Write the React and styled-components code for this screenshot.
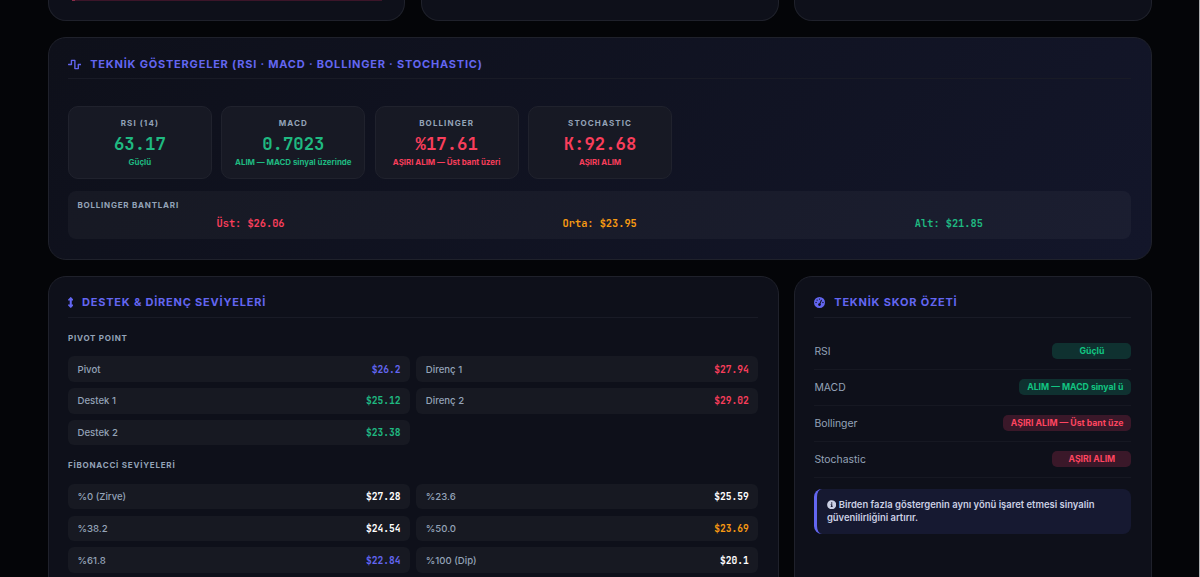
import React from "react";
import styled, { createGlobalStyle } from "styled-components";
import { FaWaveSquare, FaInfoCircle } from "react-icons/fa";
import { FaGaugeHigh, FaUpDown } from "react-icons/fa6";

const colors = {
  accent: "#6366f1",
  green: "#1fb981",
  red: "#f93e5b",
  orange: "#f79a12",
  white: "#ffffff",
  muted: "#94a3b8",
};

const indicators = [
  { name: "RSI (14)", value: "63.17", note: "Güçlü", tone: "green" },
  { name: "MACD", value: "0.7023", note: "ALIM — MACD sinyal üzerinde", tone: "green" },
  { name: "BOLLINGER", value: "%17.61", note: "AŞIRI ALIM — Üst bant üzeri", tone: "red" },
  { name: "STOCHASTIC", value: "K:92.68", note: "AŞIRI ALIM", tone: "red" },
];

const bands = [
  { text: "Üst: $26.06", tone: "red" },
  { text: "Orta: $23.95", tone: "orange" },
  { text: "Alt: $21.85", tone: "green" },
];

const pivots = [
  { label: "Pivot", value: "$26.2", tone: "accent" },
  { label: "Direnç 1", value: "$27.94", tone: "red" },
  { label: "Destek 1", value: "$25.12", tone: "green" },
  { label: "Direnç 2", value: "$29.02", tone: "red" },
  { label: "Destek 2", value: "$23.38", tone: "green" },
];

const fibonacci = [
  { label: "%0 (Zirve)", value: "$27.28", tone: "white" },
  { label: "%23.6", value: "$25.59", tone: "white" },
  { label: "%38.2", value: "$24.54", tone: "white" },
  { label: "%50.0", value: "$23.69", tone: "orange" },
  { label: "%61.8", value: "$22.84", tone: "accent" },
  { label: "%100 (Dip)", value: "$20.1", tone: "white" },
];

const scores = [
  { label: "RSI", text: "Güçlü", tone: "green" },
  { label: "MACD", text: "ALIM — MACD sinyal ü", tone: "green" },
  { label: "Bollinger", text: "AŞIRI ALIM — Üst bant üze", tone: "red" },
  { label: "Stochastic", text: "AŞIRI ALIM", tone: "red" },
];

const Levels = ({ items }) => (
  <LevelGrid>
    {items.map((item) => (
      <Level key={item.label}>
        <span>{item.label}</span>
        <LevelValue $tone={item.tone}>{item.value}</LevelValue>
      </Level>
    ))}
  </LevelGrid>
);

const App = () => {
  return (
    <Page>
      <GlobalStyle />
      <Dashboard>
        <StubCard>
          <StubLine />
        </StubCard>
        <StubCard />
        <StubCard />

        <Card $span={3} $glow>
          <CardTitle $icon="13.75px">
            <FaWaveSquare />
            TEKNİK GÖSTERGELER (RSI · MACD · BOLLINGER · STOCHASTIC)
          </CardTitle>
          <Indicators>
            {indicators.map((item) => (
              <Indicator key={item.name}>
                <IndicatorName>{item.name}</IndicatorName>
                <IndicatorValue $tone={item.tone}>{item.value}</IndicatorValue>
                <IndicatorNote $tone={item.tone}>{item.note}</IndicatorNote>
              </Indicator>
            ))}
          </Indicators>
          <BandBox>
            <BandTitle>BOLLINGER BANTLARI</BandTitle>
            <BandRow>
              {bands.map((band) => (
                <Band key={band.text} $tone={band.tone}>
                  {band.text}
                </Band>
              ))}
            </BandRow>
          </BandBox>
        </Card>

        <Card $span={2}>
          <CardTitle $icon="5.5px">
            <FaUpDown />
            DESTEK &amp; DİRENÇ SEVİYELERİ
          </CardTitle>
          <SectionTitle>PIVOT POINT</SectionTitle>
          <Levels items={pivots} />
          <SectionTitle>FİBONACCİ SEVİYELERİ</SectionTitle>
          <Levels items={fibonacci} />
        </Card>

        <Card $span={1}>
          <CardTitle $icon="11px">
            <FaGaugeHigh />
            TEKNİK SKOR ÖZETİ
          </CardTitle>
          <ScoreList>
            {scores.map((score) => (
              <ScoreRow key={score.label}>
                <span>{score.label}</span>
                <Badge $tone={score.tone}>{score.text}</Badge>
              </ScoreRow>
            ))}
          </ScoreList>
          <Hint>
            <FaInfoCircle /> Birden fazla göstergenin aynı yönü işaret etmesi sinyalin
            güvenilirliğini artırır.
          </Hint>
        </Card>
      </Dashboard>
    </Page>
  );
};

const GlobalStyle = createGlobalStyle`
  * {
    box-sizing: border-box;
  }

  body {
    margin: 0;
    background: #040508;
    font-family: Inter, sans-serif;
    overflow: hidden;
  }
`;

const Page = styled.div`
  height: 577px;
  overflow: hidden;
  border-right: 1px solid #b0b0b2;
`;

const Dashboard = styled.div`
  display: grid;
  grid-template-columns: repeat(3, 1fr);
  grid-template-rows: 21.4px 222.4px 340px;
  gap: 16px 15.8px;
  width: 1104.4px;
  margin-left: 47.6px;
`;

const StubCard = styled.div`
  padding: 0 22px 0 20px;
  background: #0e101a;
  border: 1px solid #1f212b;
  border-top: none;
  border-radius: 0 0 18px 18px;
`;

const StubLine = styled.div`
  height: 1px;
  margin-left: 3px;
  background: linear-gradient(90deg, #8a2c48 3px, #3c1529 3px);
`;

const Card = styled.section`
  grid-column: span ${(props) => props.$span};
  padding: 19px 19.6px 0 19px;
  background: ${(props) =>
    props.$glow ? "linear-gradient(135deg, #0e101a 0%, #13162a 100%)" : "#0e101a"};
  border: 1px solid #1f212b;
  border-radius: 18px;
`;

const CardTitle = styled.h2`
  display: flex;
  align-items: center;
  gap: 8.9px;
  height: 22px;
  margin: 0;
  padding-bottom: 7.6px;
  border-bottom: 1px solid #191b26;
  color: ${colors.accent};
  font-size: 11px;
  font-weight: 700;
  letter-spacing: 0.79px;
  line-height: 13px;

  svg {
    flex: none;
    width: ${(props) => props.$icon};
    height: 11px;
  }
`;

const Indicators = styled.div`
  display: grid;
  grid-template-columns: repeat(4, 143.8px);
  gap: 9.6px;
  margin: 27px 0 0 0.4px;
`;

const Indicator = styled.div`
  height: 73px;
  padding-top: 10.6px;
  background: #171924;
  border: 1px solid #20222d;
  border-radius: 10px;
  text-align: center;
  white-space: nowrap;
`;

const IndicatorName = styled.div`
  color: ${colors.muted};
  font-size: 8px;
  font-weight: 700;
  letter-spacing: 1.1px;
  line-height: 10px;
`;

const IndicatorValue = styled.div`
  margin-top: 4px;
  color: ${(props) => colors[props.$tone]};
  font-family: "JetBrains Mono", "DejaVu Sans Mono", monospace;
  font-size: 17.3px;
  font-weight: 700;
  line-height: 24px;
`;

const IndicatorNote = styled.div`
  color: ${(props) => colors[props.$tone]};
  font-size: 7.9px;
  font-weight: 700;
  line-height: 13px;
`;

const BandBox = styled.div`
  height: 48px;
  margin-top: 12px;
  padding: 9px 9.5px 9px 9.9px;
  background: rgba(255, 255, 255, 0.035);
  border-radius: 8px;
`;

const BandTitle = styled.div`
  color: ${colors.muted};
  font-size: 8px;
  font-weight: 700;
  letter-spacing: 0.77px;
  line-height: 10px;
`;

const BandRow = styled.div`
  display: flex;
  justify-content: space-around;
  margin-top: 6px;
`;

const Band = styled.span`
  color: ${(props) => colors[props.$tone]};
  font-family: "JetBrains Mono", "DejaVu Sans Mono", monospace;
  font-size: 10.3px;
  font-weight: 700;
  line-height: 15px;
`;

const SectionTitle = styled.h3`
  margin: 14.8px 0 12.8px 0.4px;
  color: ${colors.muted};
  font-size: 8px;
  font-weight: 700;
  letter-spacing: 0.77px;
  line-height: 11px;
`;

const LevelGrid = styled.div`
  display: grid;
  grid-template-columns: 1fr 1fr;
  gap: 6.4px 6.3px;
`;

const Level = styled.div`
  display: flex;
  align-items: center;
  justify-content: space-between;
  height: 25.4px;
  padding: 0 9.2px 0 9.9px;
  background: #171922;
  border-radius: 6px;
  color: ${colors.muted};
  font-size: 9.6px;
  font-weight: 500;
`;

const LevelValue = styled.span`
  color: ${(props) => colors[props.$tone]};
  font-family: "JetBrains Mono", "DejaVu Sans Mono", monospace;
  font-size: 9.6px;
  font-weight: 700;
`;

const ScoreList = styled.div`
  margin-top: 15.9px;
`;

const ScoreRow = styled.div`
  display: flex;
  align-items: center;
  justify-content: space-between;
  height: 36px;
  border-bottom: 1px solid #161822;
  color: ${colors.muted};
  font-size: 10.4px;
`;

const Badge = styled.span`
  min-width: 79px;
  padding: 0 8px;
  background: ${(props) => (props.$tone === "green" ? "#0f3130" : "#3a1829")};
  border-radius: 5px;
  color: ${(props) => (props.$tone === "green" ? "#12c481" : "#ff4560")};
  font-size: 8.7px;
  font-weight: 700;
  line-height: 16.5px;
  text-align: center;
`;

const Hint = styled.div`
  margin-top: 11px;
  padding: 9.5px 9.5px 9px;
  background: #161931;
  border-left: 3px solid ${colors.accent};
  border-radius: 8px;
  color: #cbd0e4;
  font-size: 9.45px;
  font-weight: 600;
  line-height: 13.3px;

  svg {
    vertical-align: -1px;
  }
`;

export default App;
